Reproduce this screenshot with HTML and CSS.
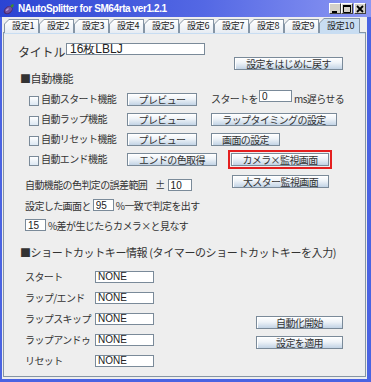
FILE: index.html
```html
<!DOCTYPE html>
<html lang="ja">
<head>
  <meta charset="UTF-8" />
  <title>NAutoSplitter for SM64rta ver1.2.1</title>
  <link rel="stylesheet" href="styles.css">
</head>
<body>
  <div class="window">

    <!-- Title bar -->
    <div class="titlebar">
      <svg class="app-icon" viewBox="0 0 12 12" width="12" height="12">
        <ellipse cx="5.2" cy="7.2" rx="4.9" ry="3.5" transform="rotate(-38 5.2 7.2)" fill="#4b2c73" />
        <ellipse cx="5.4" cy="6.9" rx="3.9" ry="2.6" transform="rotate(-38 5.4 6.9)" fill="#74509e" />
        <ellipse cx="4.3" cy="6.6" rx="1.8" ry="0.8" transform="rotate(-38 4.3 6.6)" fill="#b59ad6" />
        <path d="M7.6 2.6 L9.3 1.2 L10.9 1.6 L10.4 3.4 L9.2 4.6 L8.2 4.2 Z" fill="#3f8f2a" />
      </svg>
      <span class="title-text">NAutoSplitter for SM64rta ver1.2.1</span>
      <div class="win-buttons">
        <span class="win-btn">
          <svg viewBox="0 0 8 8" width="8" height="8"><rect x="1" y="6" width="5" height="2" fill="#000" /></svg>
        </span>
        <span class="win-btn">
          <svg viewBox="0 0 8 8" width="8" height="8"><path d="M0.5 0.5 H7.5 V7.5 H0.5 Z M0.5 1.5 H7.5" fill="none" stroke="#000" stroke-width="1" /><rect x="0" y="0" width="8" height="2" fill="#000" /></svg>
        </span>
        <span class="win-btn close">
          <svg viewBox="0 0 8 8" width="8" height="8"><path d="M1 1 L7 7 M7 1 L1 7" stroke="#000" stroke-width="1.8" /></svg>
        </span>
      </div>
    </div>

    <div class="frame">
      <!-- Tabs -->
      <div class="tabs">
        <div class="tab"><span class="tab-face">設定1</span></div>
        <div class="tab"><span class="tab-face">設定2</span></div>
        <div class="tab"><span class="tab-face">設定3</span></div>
        <div class="tab"><span class="tab-face">設定4</span></div>
        <div class="tab"><span class="tab-face">設定5</span></div>
        <div class="tab"><span class="tab-face">設定6</span></div>
        <div class="tab"><span class="tab-face">設定7</span></div>
        <div class="tab"><span class="tab-face">設定8</span></div>
        <div class="tab"><span class="tab-face">設定9</span></div>
        <div class="tab active"><span class="tab-face">設定10</span></div>
      </div>

      <!-- Settings panel -->
      <div class="panel">
        <div class="title-row">
          <span class="title-label">タイトル</span>
          <input class="field title-field" type="text" value="16枚LBLJ" />
          <button class="btn reset-btn">設定をはじめに戻す</button>
        </div>

        <div class="heading">■自動機能</div>

        <div class="auto-row">
          <span class="check"><span class="box"></span>自動スタート機能</span>
          <button class="btn preview">プレビュー</button>
          <span class="extra">スタートを<input class="field delay" type="text" value="0" />ms遅らせる</span>
        </div>
        <div class="auto-row">
          <span class="check"><span class="box"></span>自動ラップ機能</span>
          <button class="btn preview">プレビュー</button>
          <button class="btn lap-btn">ラップタイミングの設定</button>
        </div>
        <div class="auto-row">
          <span class="check"><span class="box"></span>自動リセット機能</span>
          <button class="btn preview">プレビュー</button>
          <button class="btn screen-btn">画面の設定</button>
        </div>
        <div class="auto-row">
          <span class="check"><span class="box"></span>自動エンド機能</span>
          <button class="btn end-btn">エンドの色取得</button>
          <button class="btn camera-btn">カメラ×監視画面</button>
        </div>

        <div class="value-row tolerance-row">
          <span class="tol-left">自動機能の色判定の誤差範囲<span class="pm">±</span><input class="field num" type="text" value="10" /></span>
          <button class="btn star-btn">大スター監視画面</button>
        </div>
        <div class="value-row">
          <span>設定した画面と</span><input class="field num small" type="text" value="95" /><span>%一致で判定を出す</span>
        </div>
        <div class="value-row">
          <input class="field num small first" type="text" value="15" /><span>%差が生じたらカメラ×と見なす</span>
        </div>

        <div class="heading shortcut-head">■ショートカットキー情報 (タイマーのショートカットキーを入力)</div>

        <div class="shortcut-area">
          <div class="keys">
            <div class="key-row"><span class="key-label">スタート</span><input class="field key" type="text" value="NONE" /></div>
            <div class="key-row"><span class="key-label">ラップ/エンド</span><input class="field key" type="text" value="NONE" /></div>
            <div class="key-row"><span class="key-label">ラップスキップ</span><input class="field key" type="text" value="NONE" /></div>
            <div class="key-row"><span class="key-label">ラップアンドゥ</span><input class="field key" type="text" value="NONE" /></div>
            <div class="key-row"><span class="key-label">リセット</span><input class="field key" type="text" value="NONE" /></div>
          </div>
          <div class="actions">
            <button class="btn action-btn">自動化開始</button>
            <button class="btn action-btn">設定を適用</button>
          </div>
        </div>
      </div>
    </div>
  </div>
</body>
</html>
```

FILE: styles.css
```css
/* Basic reset */
* {
  box-sizing: border-box;
}
body {
  margin: 0;
  background-color: #eeeeee;
  font-family: "Noto Sans CJK JP", sans-serif;
  font-size: 10px;
  letter-spacing: -0.6px;
  color: #333;
}

/* Window */
.window {
  width: 371px;
  height: 382px;
  display: flex;
  flex-direction: column;
}
.titlebar {
  height: 17px;
  flex: none;
  display: flex;
  align-items: center;
  padding-left: 3px;
  background: linear-gradient(90deg, #2b44d3 0%, #5468e4 55%, #8c97f3 100%);
}
.app-icon {
  flex: none;
}
.title-text {
  margin-left: 3px;
  color: white;
  font: bold 10px "Liberation Sans", Arial, sans-serif;
  letter-spacing: -0.4px;
}
.win-buttons {
  margin-left: auto;
  margin-right: 5px;
  display: flex;
}
.win-btn {
  width: 12px;
  height: 11px;
  display: flex;
  align-items: center;
  justify-content: center;
  background-color: #d4d0c8;
  border: 1px solid;
  border-color: #ffffff #404040 #404040 #ffffff;
}
.win-btn.close {
  margin-left: 1px;
}

.frame {
  flex: 1;
  display: flex;
  flex-direction: column;
  border-style: solid;
  border-color: #4a63e2;
  border-width: 0 4px 3px 2px;
  background-color: #eeeeee;
}

/* Tabs */
.tabs {
  height: 16px;
  flex: none;
  display: flex;
  align-items: flex-end;
  padding-left: 2px;
  margin-bottom: -1px;
  position: relative;
  z-index: 1;
}
.tab {
  width: 35px;
  height: 14px;
  padding: 1px 1px 0 1px;
  background-color: #8595a5;
  clip-path: polygon(0 5px, 5px 0, 100% 0, 100% 100%, 0 100%);
}
.tab-face {
  display: block;
  height: 100%;
  padding-left: 7px;
  font-size: 9px;
  line-height: 12px;
  letter-spacing: -0.2px;
  color: #222;
  background: linear-gradient(#ffffff, #e6ecf3);
  clip-path: polygon(0 4px, 4px 0, 100% 0, 100% 100%, 0 100%);
}
.tab.active {
  width: 41px;
  height: 15px;
}
.tab.active .tab-face {
  background: #c8ddf2;
  line-height: 14px;
}

/* Panel */
.panel {
  height: 345px;
  margin: 0 1px;
  border: 1px solid #8595a5;
  box-shadow: inset 0 1px 0 #c8ddf2;
}

.title-row {
  display: flex;
  align-items: flex-start;
  margin-top: 10px;
  padding-left: 14px;
  height: 27px;
}
.title-label {
  width: 48px;
  font-size: 12px;
  letter-spacing: -0.2px;
  line-height: 17px;
}
.title-field {
  width: 139px;
  height: 17px;
  font-size: 12px !important;
  padding-left: 3px !important;
}
.reset-btn {
  width: 109px;
  margin-top: 14px;
  margin-left: 29px;
}

.heading {
  margin-top: 1px;
  padding-left: 16px;
  font-size: 11px;
  line-height: 14px;
  letter-spacing: -0.4px;
  color: #333;
}

/* Form controls */
.field {
  height: 12px;
  padding: 0 0 0 2px;
  border: 1px solid #7a8a99;
  background-color: white;
  font: 10px "Liberation Sans", Arial, sans-serif;
  color: #222;
  letter-spacing: 0;
  outline: none;
}
.btn {
  height: 13px;
  padding: 0;
  border: 1px solid #7a8a99;
  background: linear-gradient(#ffffff 0%, #eef3f8 45%, #c2d3e5 100%);
  box-shadow: inset 1px 1px 0 #ffffff;
  font-family: "Noto Sans CJK JP", sans-serif;
  font-size: 10px;
  letter-spacing: -0.6px;
  line-height: 11px;
  color: #333;
}

/* Automatic feature rows */
.auto-row {
  display: flex;
  align-items: flex-start;
  height: 20px;
  padding-left: 25px;
  line-height: 20px;
}
.auto-row:first-of-type {
  margin-top: 4px;
}
.heading + .auto-row {
  margin-top: 4px;
}
.check {
  width: 98px;
  display: flex;
  align-items: flex-start;
}
.box {
  width: 10px;
  height: 10px;
  margin: 7px 2px 0 0;
  border: 1px solid #7a8a99;
  background: linear-gradient(#ffffff, #dde8f3);
}
.auto-row .btn {
  margin-top: 4px;
}
.preview {
  width: 70px;
}
.end-btn {
  width: 90px;
}
.extra {
  margin-left: 14px;
  display: flex;
  align-items: flex-start;
}
.delay {
  width: 33px;
  margin: 1px 2px 0 1px;
}
.lap-btn {
  width: 126px;
  margin-left: 14px;
}
.screen-btn {
  width: 69px;
  margin-left: 14px;
}
.camera-btn {
  width: 98px;
  margin-left: 14px;
  outline: 2px solid #e41f1f;
  outline-offset: 1px;
}

/* Value rows */
.value-row {
  display: flex;
  align-items: center;
  height: 20px;
  padding-left: 21px;
}
.tolerance-row {
  margin-top: 6px;
  align-items: flex-start;
  line-height: 20px;
}
.tol-left {
  width: 207px;
  display: flex;
  align-items: center;
}
.pm {
  margin: 0 3px 0 8px;
}
.num {
  width: 24px;
}
.num.small {
  width: 21px;
  margin: 0 2px 0 2px;
}
.num.first {
  margin-left: 0;
}
.star-btn {
  width: 97px;
}

.shortcut-head {
  margin-top: 10px;
}

/* Shortcut keys */
.shortcut-area {
  display: flex;
  margin-top: 7px;
}
.keys {
  padding-left: 21px;
}
.key-row {
  display: flex;
  align-items: center;
  height: 21px;
}
.key-label {
  width: 70px;
}
.key {
  width: 59px;
}
.actions {
  display: flex;
  flex-direction: column;
  gap: 7px;
  margin: 50px 0 0 102px;
}
.action-btn {
  width: 87px;
}
```
